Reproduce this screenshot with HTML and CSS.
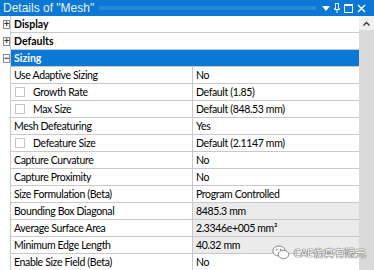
FILE: index.html
```html
<!DOCTYPE html>
<html lang="en">
  <head>
    <meta charset="UTF-8" />
    <title>Details of "Mesh"</title>
    <link rel="stylesheet" href="styles.css">
  </head>
  <body>
    <div class="panel">
      <div class="titlebar">
        <span class="title">Details of "Mesh"</span>
        <span class="dots"></span>
        <span class="tools">
          <svg width="8" height="5" viewBox="0 0 8 5"><path d="M0 0h8L4 5z" fill="#fff"/></svg>
          <svg width="6" height="10" viewBox="0 0 6 10"><path d="M1.5 0.5h3v5h1v1h-5v-1h1z M3 6.5v3.5" fill="none" stroke="#fff"/></svg>
          <svg width="9" height="9" viewBox="0 0 9 9"><rect x="0.5" y="0.5" width="8" height="8" fill="none" stroke="#fff"/><path d="M0 1.5h9" stroke="#fff"/></svg>
          <svg width="9" height="9" viewBox="0 0 9 9"><path d="M1 1l7 7M8 1l-7 7" stroke="#fff" stroke-width="1.4"/></svg>
        </span>
      </div>
      <div class="body">
        <div class="grid">
          <div class="row group">
            <span class="gutter"><i class="box">+</i></span>
            <span class="name">Display</span>
          </div>
          <div class="row group">
            <span class="gutter"><i class="box">+</i></span>
            <span class="name">Defaults</span>
          </div>
          <div class="row group open">
            <span class="gutter"><i class="box">&minus;</i></span>
            <span class="name">Sizing</span>
          </div>
          <div class="row">
            <span class="gutter"></span>
            <span class="label">Use Adaptive Sizing</span>
            <span class="value">No</span>
          </div>
          <div class="row">
            <span class="gutter"></span>
            <span class="label"><i class="check"></i>Growth Rate</span>
            <span class="value">Default (1.85)</span>
          </div>
          <div class="row">
            <span class="gutter"></span>
            <span class="label"><i class="check"></i>Max Size</span>
            <span class="value">Default (848.53 mm)</span>
          </div>
          <div class="row">
            <span class="gutter"></span>
            <span class="label">Mesh Defeaturing</span>
            <span class="value">Yes</span>
          </div>
          <div class="row">
            <span class="gutter"></span>
            <span class="label"><i class="check"></i>Defeature Size</span>
            <span class="value">Default (2.1147 mm)</span>
          </div>
          <div class="row">
            <span class="gutter"></span>
            <span class="label">Capture Curvature</span>
            <span class="value">No</span>
          </div>
          <div class="row">
            <span class="gutter"></span>
            <span class="label">Capture Proximity</span>
            <span class="value">No</span>
          </div>
          <div class="row">
            <span class="gutter"></span>
            <span class="label">Size Formulation (Beta)</span>
            <span class="value">Program Controlled</span>
          </div>
          <div class="row">
            <span class="gutter"></span>
            <span class="label">Bounding Box Diagonal</span>
            <span class="value readonly">8485.3 mm</span>
          </div>
          <div class="row">
            <span class="gutter"></span>
            <span class="label">Average Surface Area</span>
            <span class="value readonly">2.3346e+005 mm²</span>
          </div>
          <div class="row">
            <span class="gutter"></span>
            <span class="label">Minimum Edge Length</span>
            <span class="value readonly">40.32 mm</span>
          </div>
          <div class="row">
            <span class="gutter"></span>
            <span class="label">Enable Size Field (Beta)</span>
            <span class="value">No</span>
          </div>
        </div>
        <div class="scrollbar">
          <div class="arrow">
            <svg width="7" height="5" viewBox="0 0 7 5"><path d="M0.5 4.5l3-3 3 3" fill="none" stroke="#333" stroke-width="1.3"/></svg>
          </div>
          <div class="thumb"></div>
        </div>
      </div>
      <!-- watermark laid over the bottom rows -->
      <div class="watermark">
        <svg width="18" height="15" viewBox="0 0 18 15">
          <ellipse cx="7" cy="6" rx="6.3" ry="5" fill="#fff" stroke="#888" stroke-width="1"/>
          <ellipse cx="11.5" cy="9.5" rx="5.3" ry="4.2" fill="#fff" stroke="#888" stroke-width="1"/>
          <circle cx="4.8" cy="4.6" r="0.9" fill="#888"/>
          <circle cx="8.6" cy="4.6" r="0.9" fill="#888"/>
        </svg>
        <span>CAE仿真有限元</span>
      </div>
    </div>
  </body>
</html>
```

FILE: styles.css
```css
body {
  margin: 0;
  padding: 0;
  font-family: Lato, "Liberation Sans", Arial, sans-serif;
  font-size: 10.5px;
  color: #000;
  background: #fff;
}

.panel {
  position: relative;
  width: 374px;
  height: 270px;
  overflow: hidden;
}

.titlebar {
  height: 16px;
  background-color: #0a78d4;
  display: flex;
  align-items: center;
  color: #fff;
}

.title {
  padding-left: 3px;
  font-family: "Liberation Sans", Arial, sans-serif;
  font-size: 12px;
  white-space: nowrap;
  color: #eaf3fc;
}

/* dithered grip behind the title */
.dots {
  flex: 1;
  height: 4px;
  margin: 0 6px 0 5px;
  background-image: radial-gradient(circle, #4a9be2 0.6px, transparent 0.8px);
  background-size: 2px 2px;
}

.tools {
  display: flex;
  align-items: center;
  gap: 4px;
  padding-right: 8px;
}

.body {
  display: flex;
  height: 254px;
}

.grid {
  flex: 1;
  border-left: 1px solid transparent;
}

.row {
  display: grid;
  grid-template-columns: 10px 182px 1fr;
  height: 17px;
}

.gutter {
  border-right: 1px solid #c8c8c8;
  display: flex;
  align-items: center;
  justify-content: center;
}

.box {
  width: 7px;
  height: 7px;
  border: 1px solid #8c8c8c;
  font-style: normal;
  font-family: "Liberation Sans", Arial, sans-serif;
  font-size: 9px;
  line-height: 6px;
  text-align: center;
  font-weight: bold;
  color: #333;
  margin-left: 2px;
}

.label,
.value,
.name {
  border-bottom: 1px solid #c8c8c8;
  display: flex;
  align-items: center;
  padding-left: 3px;
  white-space: nowrap;
}

.label,
.value {
  letter-spacing: -0.35px;
}

.label {
  border-right: 1px solid #c8c8c8;
}

.value {
  padding-left: 3px;
}

.readonly {
  background-color: #ebebeb;
}

.group .name {
  grid-column: 2 / 4;
  font-weight: bold;
}

.group.open .name {
  background-color: #0a78d4;
  color: #fff;
}

.check {
  width: 8px;
  height: 8px;
  border: 1px solid #c4c4c4;
  background: #fff;
  margin: 0 8px 0 1px;
}

.scrollbar {
  width: 15px;
  background-color: #dadada;
  display: flex;
  flex-direction: column;
}

.arrow {
  height: 14px;
  background-color: #f0f0f0;
  display: flex;
  align-items: center;
  justify-content: center;
}

.watermark {
  position: absolute;
  left: 272px;
  top: 245px;
  display: flex;
  align-items: center;
  gap: 4px;
  font-family: "Noto Sans CJK SC", "Liberation Sans", sans-serif;
  font-size: 10.5px;
  color: #fff;
  text-shadow: 0 0 1px #555, 0 0 1px #555, 0 0 1px #555;
}
```
